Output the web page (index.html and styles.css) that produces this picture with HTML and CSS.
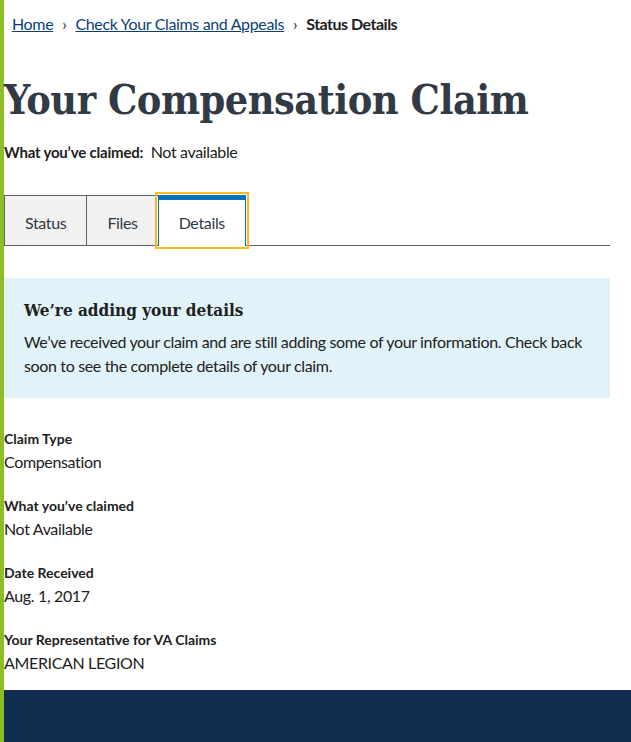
FILE: index.html
```html
<!DOCTYPE html>
<html lang="en">
<head>
<meta charset="utf-8">
<title>Your Compensation Claim</title>
<link rel="stylesheet" href="styles.css">
</head>
<body>
<div class="page">
  <nav class="breadcrumbs">
    <a href="#">Home</a><span class="sep">›</span><a href="#">Check Your Claims and Appeals</a><span class="sep">›</span><strong>Status Details</strong>
  </nav>
  <main class="content">
    <h1 class="title">Your Compensation Claim</h1>
    <p class="claimed"><strong>What you’ve claimed:</strong>&nbsp; Not available</p>
    <div class="tabs">
      <a class="tab" href="#">Status</a>
      <a class="tab" href="#">Files</a>
      <a class="tab tab-active" href="#">Details</a>
    </div>
    <div class="alert">
      <h4 class="alert-heading">We’re adding your details</h4>
      <p class="alert-text">We’ve received your claim and are still adding some of your information. Check back soon to see the complete details of your claim.</p>
    </div>
    <dl class="details">
      <div class="detail"><dt>Claim Type</dt><dd>Compensation</dd></div>
      <div class="detail"><dt>What you’ve claimed</dt><dd>Not Available</dd></div>
      <div class="detail"><dt>Date Received</dt><dd>Aug. 1, 2017</dd></div>
      <div class="detail"><dt>Your Representative for VA Claims</dt><dd>AMERICAN LEGION</dd></div>
    </dl>
  </main>
  <footer class="footer"></footer>
</div>
</body>
</html>
```
FILE: styles.css
```css
html, body {
  margin: 0;
  padding: 0;
  background: #ffffff;
}
body {
  font-family: "Lato", "Liberation Sans", sans-serif;
  color: #212121;
  letter-spacing: -0.35px;
}
.page {
  border-left: 4px solid #8dbe26;
  min-height: 742px;
  display: flex;
  flex-direction: column;
}
.breadcrumbs {
  padding: 14px 8px 0 8px;
  font-size: 16px;
  line-height: 20px;
}
.breadcrumbs a {
  color: #0b3f74;
  text-decoration: underline;
}
.breadcrumbs strong {
  color: #212121;
  font-weight: 700;
  letter-spacing: -0.5px;
}
.sep {
  display: inline-block;
  margin: 0 9px;
  color: #212121;
}
.content {
  width: 606px;
}
.title {
  font-family: "DejaVu Serif Condensed", "DejaVu Serif", serif;
  font-weight: 700;
  font-size: 41px;
  line-height: 48px;
  color: #323a45;
  margin: 42px 0 0 0;
  letter-spacing: -0.5px;
}
.claimed {
  margin: 16px 0 0 0;
  font-size: 16px;
  line-height: 24px;
  color: #212121;
}
.claimed strong {
  font-size: 15px;
  letter-spacing: -0.2px;
}
.tabs {
  margin-top: 31px;
  display: flex;
  height: 50px;
  border-bottom: 1px solid #5b616b;
}
.tab {
  display: block;
  box-sizing: border-box;
  height: 50px;
  padding: 15px 20px 0 20px;
  line-height: 24px;
  background: #f1f1f1;
  color: #323a45;
  font-size: 16px;
  text-decoration: none;
  border-top: 1px solid #5b616b;
  border-right: 1px solid #5b616b;
}
.tab:first-child {
  border-left: 1px solid #5b616b;
}
.tab-active {
  background: #ffffff;
  height: 51px;
  border-top: 5px solid #0071bb;
  border-left: 1px solid #0071bb;
  border-right: 1px solid #0071bb;
  margin-left: -1px;
  margin-bottom: -1px;
  padding: 11px 20px 0 20px;
  outline: 2px solid #fdb81e;
  outline-offset: 1px;
}
.alert {
  margin-top: 32px;
  background: #e1f3f8;
  padding: 20px 20px 20px 20px;
}
.alert-heading {
  font-family: "DejaVu Serif Condensed", "DejaVu Serif", serif;
  font-size: 17px;
  line-height: 24px;
  font-weight: 700;
  color: #212121;
  margin: 0;
  letter-spacing: 0;
}
.alert-text {
  margin: 8px 0 0 0;
  font-size: 16px;
  line-height: 24px;
  color: #212121;
}
.details {
  margin: 31px 0 0 0;
  padding-bottom: 15px;
}
.detail + .detail {
  margin-top: 22px;
}
.detail dt {
  font-size: 14px;
  line-height: 20px;
  font-weight: 700;
  color: #212121;
  letter-spacing: 0;
}
.detail dd {
  margin: 1px 0 0 0;
  font-size: 16px;
  line-height: 24px;
}
.footer {
  flex: 1;
  background: #112e51;
}
```
